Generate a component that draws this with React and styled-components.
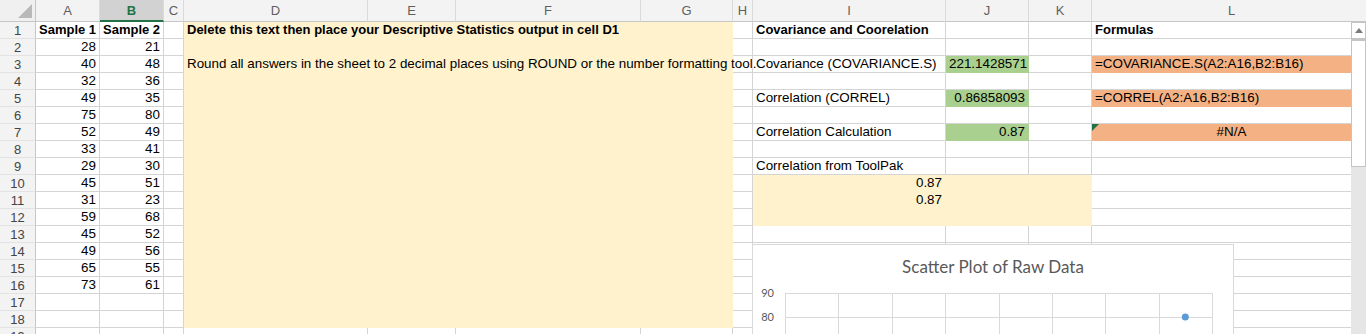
import styled, { createGlobalStyle } from "styled-components";

const GlobalStyle = createGlobalStyle`
  html, body {
    margin: 0;
    padding: 0;
    overflow: hidden;
    background: #fff;
  }
  body {
    font-family: "Liberation Sans", Arial, sans-serif;
  }
`;

const COLS = [
  ["A", 64],
  ["B", 64],
  ["C", 20],
  ["D", 184],
  ["E", 88],
  ["F", 185],
  ["G", 92],
  ["H", 20],
  ["I", 193],
  ["J", 83],
  ["K", 63],
  ["L", 280],
];

const FILLS = {
  beige: "#fff2cc",
  green: "#a9d08e",
  orange: "#f4b183",
};

const sample1 = [28, 40, 32, 49, 75, 52, 33, 29, 45, 31, 59, 45, 49, 65, 73];
const sample2 = [21, 48, 36, 35, 80, 49, 41, 30, 51, 23, 68, 52, 56, 55, 61];

const cells = {
  A1: { v: "Sample 1", bold: true },
  B1: { v: "Sample 2", bold: true },
  I1: { v: "Covariance and Coorelation", bold: true },
  L1: { v: "Formulas", bold: true },
  I3: { v: "Covariance (COVARIANCE.S)" },
  J3: { v: "221.1428571", align: "right", fill: "green" },
  L3: { v: "=COVARIANCE.S(A2:A16,B2:B16)", fill: "orange" },
  I5: { v: "Correlation (CORREL)" },
  J5: { v: "0.86858093", align: "right", fill: "green" },
  L5: { v: "=CORREL(A2:A16,B2:B16)", fill: "orange" },
  I7: { v: "Correlation Calculation" },
  J7: { v: "0.87", align: "right", fill: "green" },
  L7: { v: "#N/A", align: "center", fill: "orange", flag: true },
  I9: { v: "Correlation from ToolPak" },
  I10: { v: "0.87", align: "right", fill: "beige" },
  J10: { fill: "beige" },
  K10: { fill: "beige" },
  I11: { v: "0.87", align: "right", fill: "beige" },
  J11: { fill: "beige" },
  K11: { fill: "beige" },
  I12: { fill: "beige" },
  J12: { fill: "beige" },
  K12: { fill: "beige" },
};

sample1.forEach((n, i) => {
  cells[`A${i + 2}`] = { v: String(n), align: "right" };
  cells[`B${i + 2}`] = { v: String(sample2[i]), align: "right" };
});

const Window = styled.div`
  position: relative;
  width: 1366px;
  height: 334px;
  overflow: hidden;
  background: #fff;
`;

const Grid = styled.div`
  display: grid;
  grid-template-columns: 36px ${COLS.map(([, w]) => `${w}px`).join(" ")};
  grid-template-rows: 22px;
  grid-auto-rows: 17px;
  width: max-content;
`;

const Corner = styled.div`
  box-sizing: border-box;
  background: #f0f0f0;
  border-right: 1px solid #c6c6c6;
  border-bottom: 1px solid #c6c6c6;
  display: flex;
  align-items: flex-end;
  justify-content: flex-end;
  padding: 0 3px 3px 0;
`;

const ColHead = styled.div`
  box-sizing: border-box;
  background: ${(p) => (p.$active ? "#d2d2d2" : "#f3f3f3")};
  border-right: 1px solid #dadada;
  border-bottom: ${(p) => (p.$active ? "2px solid #217346" : "1px solid #c6c6c6")};
  color: ${(p) => (p.$active ? "#217346" : "#5f5f5f")};
  font-weight: ${(p) => (p.$active ? 700 : 400)};
  font-size: 13px;
  display: flex;
  align-items: center;
  justify-content: center;
  padding-top: ${(p) => (p.$active ? "1px" : "0")};
`;

const RowHead = styled.div`
  box-sizing: border-box;
  background: #f3f3f3;
  border-right: 1px solid #c6c6c6;
  border-bottom: 1px solid #e2e2e2;
  color: #444;
  font-size: 13px;
  line-height: 17px;
  text-align: center;
`;

const Cell = styled.div`
  position: relative;
  box-sizing: border-box;
  height: 17px;
  padding: 0 3px;
  background: ${(p) => (p.$fill ? FILLS[p.$fill] : "transparent")};
  border-right: 1px solid ${(p) => (p.$fill ? FILLS[p.$fill] : "#d4d4d4")};
  border-bottom: 1px solid ${(p) => (p.$fill ? FILLS[p.$fill] : "#d4d4d4")};
  color: #000;
  font-size: ${(p) => (p.$bold ? "13px" : "13.4px")};
  line-height: 16px;
  font-weight: ${(p) => (p.$bold ? 700 : 400)};
  text-align: ${(p) => p.$align || "left"};
  white-space: nowrap;
`;

const ErrorFlag = styled.span`
  position: absolute;
  top: 0;
  left: 0;
  width: 0;
  height: 0;
  border-top: 7px solid #217346;
  border-right: 7px solid transparent;
`;

const Note = styled.div`
  grid-column: 5 / span 4;
  grid-row: 2 / span 18;
  background: ${FILLS.beige};
  display: flex;
  flex-direction: column;
  padding: 0 3px;
  color: #000;
`;

const NoteLine = styled.div`
  height: 17px;
  line-height: 16px;
  white-space: nowrap;
  font-size: ${(p) => (p.$bold ? "13px" : "13.4px")};
  font-weight: ${(p) => (p.$bold ? 700 : 400)};
`;

const Chart = styled.div`
  position: absolute;
  left: 752px;
  top: 244px;
  width: 482px;
  height: 270px;
  box-sizing: border-box;
  background: #fff;
  border: 1px solid #d9d9d9;
`;

const ChartTitle = styled.div`
  padding-top: 11px;
  margin-bottom: 10px;
  height: 22px;
  line-height: 22px;
  text-align: center;
  font-family: Lato, "Open Sans", sans-serif;
  font-size: 17px;
  color: #595959;
`;

const Scrollbar = styled.div`
  position: absolute;
  top: 22px;
  right: 0;
  bottom: 0;
  width: 15px;
  display: flex;
  flex-direction: column;
  background: #e6e6e6;
`;

const ScrollButton = styled.div`
  box-sizing: border-box;
  height: 17px;
  background: #fff;
  border: 1px solid #c4c4c4;
  display: flex;
  align-items: center;
  justify-content: center;
`;

const Thumb = styled.div`
  box-sizing: border-box;
  height: 128px;
  background: #fff;
  border: 1px solid #c4c4c4;
  border-top: 2px solid #c4c4c4;
`;

const PLOT_LEFT = 32;
const PLOT_STEP_X = 53.375;
const PLOT_TOP = 5;
const PLOT_STEP_Y = 24;

const ScatterPlot = () => {
  const xs = Array.from({ length: 9 }, (_, i) => i);
  const ys = Array.from({ length: 10 }, (_, i) => i);
  const bottom = PLOT_TOP + 9 * PLOT_STEP_Y;
  const right = PLOT_LEFT + 8 * PLOT_STEP_X;
  return (
    <svg width="480" height="230" style={{ display: "block" }}>
      {ys.map((j) => (
        <line
          key={`h${j}`}
          x1={PLOT_LEFT}
          x2={right}
          y1={PLOT_TOP + j * PLOT_STEP_Y + 0.5}
          y2={PLOT_TOP + j * PLOT_STEP_Y + 0.5}
          stroke="#d9d9d9"
          shapeRendering="crispEdges"
        />
      ))}
      {xs.map((i) => (
        <line
          key={`v${i}`}
          x1={Math.round(PLOT_LEFT + i * PLOT_STEP_X) + 0.5}
          x2={Math.round(PLOT_LEFT + i * PLOT_STEP_X) + 0.5}
          y1={PLOT_TOP}
          y2={bottom}
          stroke="#d9d9d9"
          shapeRendering="crispEdges"
        />
      ))}
      {ys.map((j) => (
        <text
          key={`l${j}`}
          x="21"
          y={PLOT_TOP + j * PLOT_STEP_Y + 4}
          textAnchor="end"
          fontSize="11"
          fontFamily="Lato, 'Open Sans', sans-serif"
          fill="#595959"
        >
          {90 - j * 10}
        </text>
      ))}
      {sample1.map((a, i) => (
        <circle
          key={`p${i}`}
          cx={PLOT_LEFT + (a / 10) * PLOT_STEP_X}
          cy={PLOT_TOP + ((90 - sample2[i]) / 10) * PLOT_STEP_Y}
          r="3.5"
          fill="#5b9bd5"
        />
      ))}
    </svg>
  );
};

const App = () => {
  const rows = [];
  for (let r = 1; r <= 19; r++) {
    rows.push(<RowHead key={`r${r}`}>{r}</RowHead>);
    COLS.forEach(([c]) => {
      const inNote = "DEFG".includes(c) && r <= 18;
      if (inNote) {
        if (c === "D" && r === 1) {
          rows.push(
            <Note key="note">
              <NoteLine $bold>
                Delete this text then place your Descriptive Statistics output in cell D1
              </NoteLine>
              <NoteLine />
              <NoteLine>
                Round all answers in the sheet to 2 decimal places using ROUND or the number formatting tool.
              </NoteLine>
            </Note>
          );
        }
        return;
      }
      const d = cells[`${c}${r}`] || {};
      rows.push(
        <Cell key={`${c}${r}`} $fill={d.fill} $align={d.align} $bold={d.bold}>
          {d.flag && <ErrorFlag />}
          {d.v}
        </Cell>
      );
    });
  }

  return (
    <>
      <GlobalStyle />
      <Window>
        <Grid>
          <Corner>
            <svg width="14" height="14" viewBox="0 0 14 14">
              <path d="M14 0 L14 14 L0 14 Z" fill="#b9b9b9" />
            </svg>
          </Corner>
          {COLS.map(([c]) => (
            <ColHead key={c} $active={c === "B"}>
              {c}
            </ColHead>
          ))}
          {rows}
        </Grid>
        <Chart>
          <ChartTitle>Scatter Plot of Raw Data</ChartTitle>
          <ScatterPlot />
        </Chart>
        <Scrollbar>
          <ScrollButton>
            <svg width="8" height="5" viewBox="0 0 8 5">
              <path d="M0 5 L4 0 L8 5 Z" fill="#7a7a7a" />
            </svg>
          </ScrollButton>
          <Thumb />
        </Scrollbar>
      </Window>
    </>
  );
};

export default App;
